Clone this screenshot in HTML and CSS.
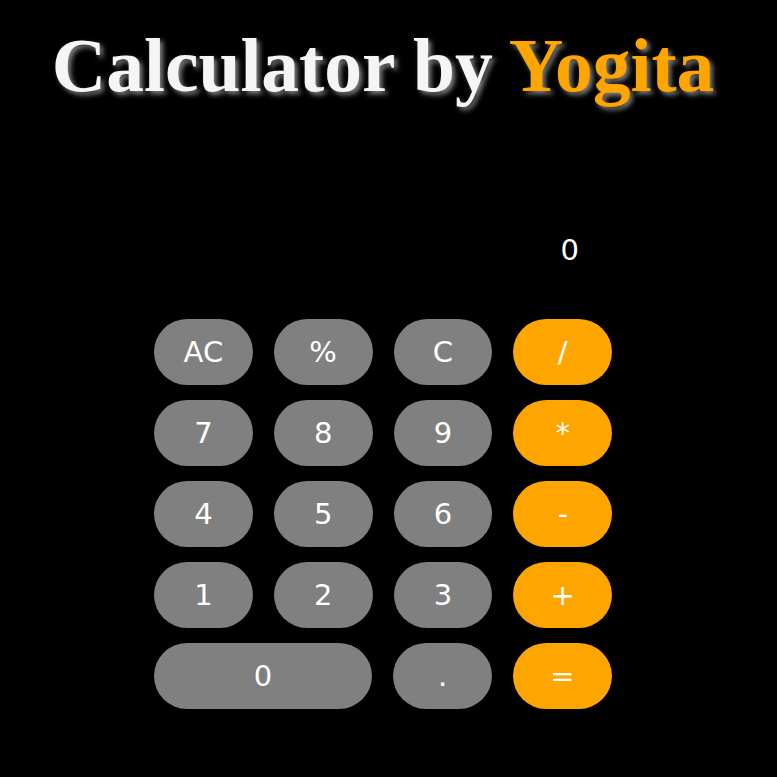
FILE: index.html
```html
<!DOCTYPE html>
<html lang="en">
<head>
<meta charset="utf-8">
<title>Calculator by Yogita</title>
<link rel="stylesheet" href="styles.css">
</head>
<body>
<h1 class="title">Calculator by <span class="accent">Yogita</span></h1>
<div class="calc">
  <div class="display">0</div>
  <div class="keys">
    <div class="row">
      <button class="key">AC</button>
      <button class="key">%</button>
      <button class="key">C</button>
      <button class="key op">/</button>
    </div>
    <div class="row">
      <button class="key">7</button>
      <button class="key">8</button>
      <button class="key">9</button>
      <button class="key op">*</button>
    </div>
    <div class="row">
      <button class="key">4</button>
      <button class="key">5</button>
      <button class="key">6</button>
      <button class="key op">-</button>
    </div>
    <div class="row">
      <button class="key">1</button>
      <button class="key">2</button>
      <button class="key">3</button>
      <button class="key op">+</button>
    </div>
    <div class="row">
      <button class="key wide">0</button>
      <button class="key">.</button>
      <button class="key op">=</button>
    </div>
  </div>
</div>
</body>
</html>
```
FILE: styles.css
```css
html, body {
  margin: 0;
  background: #000;
}
body {
  padding-right: 11px;
  font-family: "DejaVu Sans", Verdana, sans-serif;
}
.title {
  margin: 0;
  padding-top: 23px;
  font-family: "Liberation Serif", "Times New Roman", serif;
  font-weight: bold;
  font-size: 75.5px;
  line-height: 86px;
  text-align: center;
  color: #f5f5f5;
  text-shadow: 3px 3px 5px #808080;
}
.accent {
  color: #ffa500;
}
.calc {
  width: 458px;
  margin: 124px auto 0;
}
.display {
  color: #fff;
  font-size: 29px;
  line-height: 34px;
  text-align: right;
  padding-right: 33px;
}
.keys {
  margin-top: 52px;
  display: flex;
  flex-direction: column;
  gap: 15px;
}
.row {
  display: flex;
  gap: 21px;
}
.key {
  width: 99px;
  height: 66px;
  border: none;
  border-radius: 33px;
  background: #808080;
  color: #fff;
  font-family: "DejaVu Sans", Verdana, sans-serif;
  font-size: 29px;
  padding: 0;
  display: flex;
  align-items: center;
  justify-content: center;
}
.key.wide {
  width: 218px;
}
.key.op {
  background: #ffa500;
}
```
